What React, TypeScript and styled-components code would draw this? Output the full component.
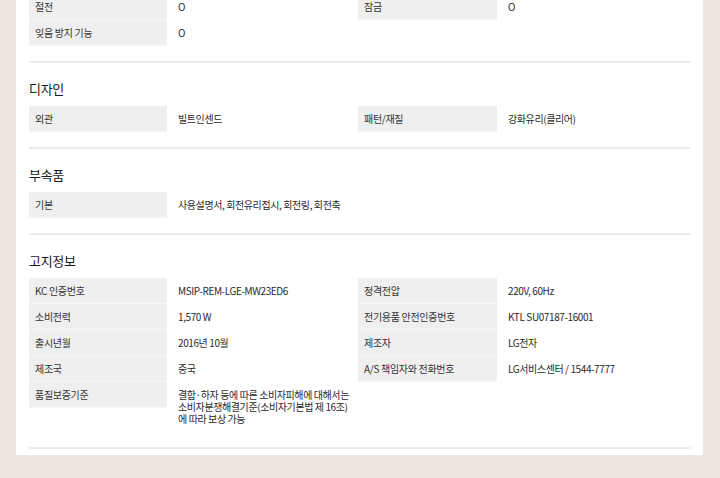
import React from 'react';
import styled, { createGlobalStyle } from 'styled-components';

interface SpecItem {
  label: string;
  value: string;
}

interface SpecSection {
  title?: string;
  items: SpecItem[];
}

const sections: SpecSection[] = [
  {
    items: [
      { label: '절전', value: 'O' },
      { label: '잠금', value: 'O' },
      { label: '잊음 방지 기능', value: 'O' },
    ],
  },
  {
    title: '디자인',
    items: [
      { label: '외관', value: '빌트인센드' },
      { label: '패턴/재질', value: '강화유리(클리어)' },
    ],
  },
  {
    title: '부속품',
    items: [{ label: '기본', value: '사용설명서, 회전유리접시, 회전링, 회전축' }],
  },
  {
    title: '고지정보',
    items: [
      { label: 'KC 인증번호', value: 'MSIP-REM-LGE-MW23ED6' },
      { label: '정격전압', value: '220V, 60Hz' },
      { label: '소비전력', value: '1,570 W' },
      { label: '전기용품 안전인증번호', value: 'KTL SU07187-16001' },
      { label: '출시년월', value: '2016년 10월' },
      { label: '제조자', value: 'LG전자' },
      { label: '제조국', value: '중국' },
      { label: 'A/S 책임자와 전화번호', value: 'LG서비스센터 / 1544-7777' },
      {
        label: '품질보증기준',
        value: '결함·하자 등에 따른 소비자피해에 대해서는 소비자분쟁해결기준(소비자기본법 제 16조)에 따라 보상 가능',
      },
    ],
  },
];

const GlobalStyle = createGlobalStyle`
  html, body {
    margin: 0;
    padding: 0;
    background-color: #ebe7e0;
    overflow: hidden;
  }
  body {
    font-family: 'Noto Sans CJK KR', 'Noto Sans', sans-serif;
    color: #333;
  }
`;

const Page = styled.div`
  width: 720px;
  height: 478px;
  overflow: hidden;
  padding: 0 17px 0 16px;
  box-sizing: border-box;
`;

const Panel = styled.div`
  background-color: #fff;
  margin-top: -6px;
  padding: 0 13px 6px 13px;
`;

const Section = styled.section`
  border-bottom: 2px solid #ebebeb;
  padding-bottom: 15px;
`;

const Title = styled.h3`
  margin: 0;
  padding-top: 16px;
  margin-bottom: 7px;
  font-size: 13px;
  line-height: 20px;
  font-weight: 400;
  color: #1a1a1a;
  letter-spacing: -0.3px;
`;

const Grid = styled.dl`
  display: grid;
  grid-template-columns: 138px 191px 139px 1fr;
  margin: 0;
  align-items: start;
`;

const Label = styled.dt`
  height: 25px;
  line-height: 25px;
  border-bottom: 1px solid #f6f6f6;
  background-color: #efefef;
  padding-left: 6px;
  font-size: 10px;
  color: #333;
  letter-spacing: -0.3px;
  white-space: nowrap;
`;

const Value = styled.dd`
  margin: 0;
  padding: 7px 4px 7px 11px;
  font-size: 10px;
  line-height: 12px;
  color: #2a2a2a;
  letter-spacing: -0.4px;
  word-break: keep-all;
`;

const App: React.FC = () => {
  return (
    <Page>
      <GlobalStyle />
      <Panel>
        {sections.map((section, i) => (
          <Section key={i}>
            {section.title && <Title>{section.title}</Title>}
            <Grid>
              {section.items.map(item => (
                <React.Fragment key={item.label}>
                  <Label>{item.label}</Label>
                  <Value>{item.value}</Value>
                </React.Fragment>
              ))}
            </Grid>
          </Section>
        ))}
      </Panel>
    </Page>
  );
};

export default App;
